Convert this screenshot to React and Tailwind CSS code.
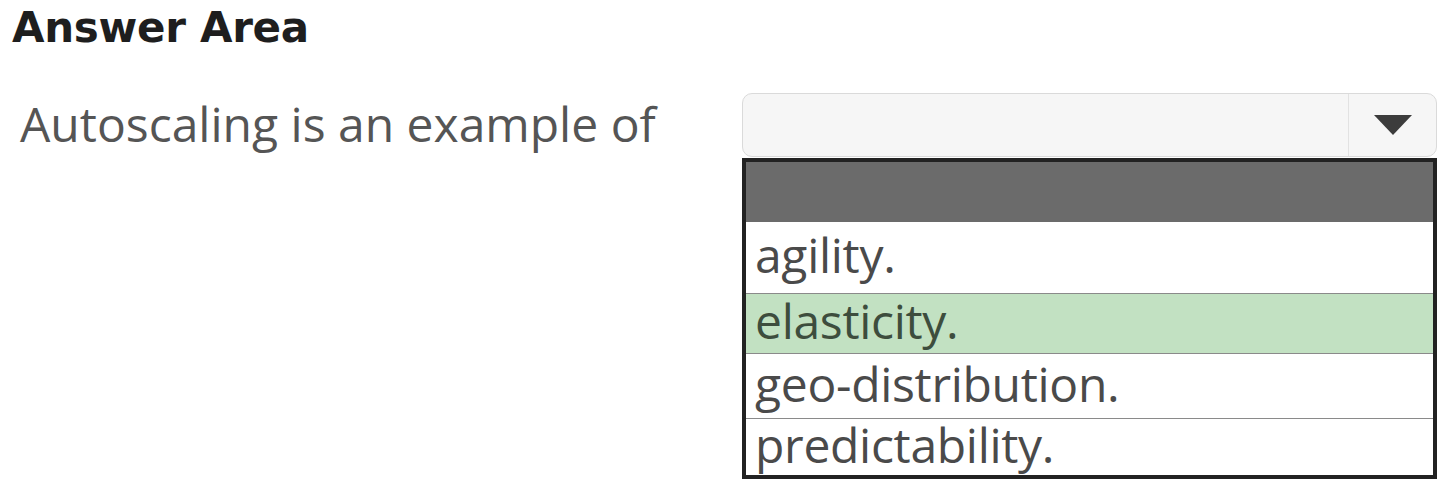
import React from "react";

const options = [
    { label: "agility.", h: "h-[71px]", picked: false },
    { label: "elasticity.", h: "h-[60px]", picked: true },
    { label: "geo-distribution.", h: "h-[65px]", picked: false },
    { label: "predictability.", h: "h-[57px]", picked: false },
];

function Dropdown() {
    return (
        <div className="h-[64px] w-full flex rounded-[10px] border border-[#dadada] bg-[#f6f6f6]">
            <div className="flex-1"></div>
            <div className="w-[88px] border-l border-[#e2e2e2] flex items-center justify-center">
                <svg width="38" height="20" viewBox="0 0 38 20">
                    <polygon points="0,0 38,0 19,20" fill="#3c3c3c" />
                </svg>
            </div>
        </div>
    );
}

function ListBox() {
    return (
        <div className="mt-[1px] w-[695px] border-[4px] border-[#222] flex flex-col bg-white">
            <div className="h-[60px] bg-[#6b6b6b]"></div>
            {options.map((o, i) => (
                <div
                    key={o.label}
                    className={`${o.h} flex items-center pl-[9px] ${i > 0 ? "border-t border-[#8a8a8a]" : ""} ${o.picked ? "bg-[#c2e1c2] text-[#3d4d3d]" : "text-[#4a4a4a]"}`}
                >
                    <span className="text-[48px] leading-none tracking-[-0.3px] -mt-[5px]">{o.label}</span>
                </div>
            ))}
        </div>
    );
}

export default function App() {
    return (
        <div className="w-[1441px] h-[489px] bg-white overflow-hidden" style={{ fontFamily: '"Open Sans", "Noto Sans", sans-serif' }}>
            <h1 className="pl-[12px] pt-[7px] text-[42px] leading-none font-bold text-[#1e1e1e] tracking-[-0.3px]" style={{ fontFamily: '"DejaVu Sans", sans-serif' }}>
                Answer Area
            </h1>
            <div className="flex mt-[44px]">
                <div className="w-[742px] pl-[20px] pt-[7px] text-[48px] leading-none text-[#555] tracking-[0px]">
                    Autoscaling is an example of
                </div>
                <div className="w-[695px] flex flex-col">
                    <Dropdown />
                    <ListBox />
                </div>
            </div>
        </div>
    );
}
